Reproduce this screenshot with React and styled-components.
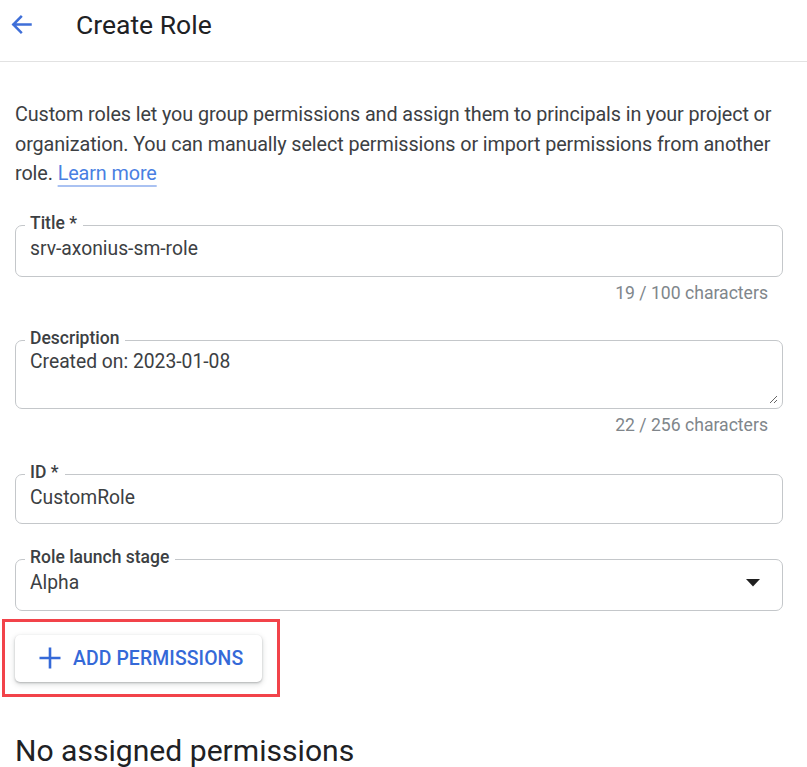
import React from "react";
import styled, { createGlobalStyle } from "styled-components";

const GlobalStyle = createGlobalStyle`
  html, body { margin: 0; padding: 0; background: #ffffff; }
  body { font-family: Roboto, "Liberation Sans", Arial, sans-serif; color: #202124; }
  * { box-sizing: border-box; }
`;

const Page = styled.div`
  width: 807px;
  min-height: 767px;
  overflow: hidden;
`;

const Header = styled.header`
  height: 62px;
  display: flex;
  align-items: center;
  border-bottom: 1px solid #e2e2e2;
  padding: 0 0 12px 8px;
`;

const BackButton = styled.button`
  width: 27px;
  height: 27px;
  padding: 0;
  border: 0;
  background: transparent;
  display: flex;
  align-items: center;
  justify-content: center;
  color: #3f6fd8;
  cursor: pointer;
`;

const PageTitle = styled.h1`
  margin: 0 0 0 41px;
  font-size: 26.5px;
  font-weight: 400;
  color: #202124;
`;

const Content = styled.main`
  padding: 0 24px 0 15px;
`;

const Intro = styled.p`
  margin: 38px 0 0;
  font-size: 19.8px;
  line-height: 29.5px;
  color: #3c4043;
  letter-spacing: -0.1px;
`;

const LearnLink = styled.a`
  color: #4a7fe2;
  text-decoration: underline;
  text-decoration-color: #aac2f2;
  text-decoration-thickness: 1.5px;
  text-underline-offset: 5px;
`;

const FieldGroup = styled.div`
  margin-top: ${(p) => p.$gap}px;
`;

const Box = styled.fieldset`
  margin: 0;
  border: 1px solid #c4c7ca;
  border-radius: 7px;
  padding: 0 14px ${(p) => p.$padBottom}px 14px;
  display: flex;
  align-items: center;
`;

const Label = styled.legend`
  margin-left: -5px;
  padding: 0 6px 6px 5px;
  font-size: 17.5px;
  line-height: 20px;
  font-weight: 500;
  color: #3c4043;
`;

const TextInput = styled.input`
  flex: 1;
  border: 0;
  outline: none;
  padding: 0;
  margin: 0;
  height: 20px;
  font-family: inherit;
  font-size: 19.3px;
  line-height: 20px;
  color: #3c4043;
  background: transparent;
`;

const TextArea = styled.textarea`
  flex: 1;
  border: 0;
  outline: none;
  padding: 0;
  margin: -2px -10px 0 0;
  height: 52px;
  font-family: inherit;
  font-size: 19.3px;
  line-height: 20px;
  color: #3c4043;
  background: transparent;
  resize: vertical;
`;

const SelectValue = styled.div`
  flex: 1;
  font-size: 19.3px;
  line-height: 20px;
  color: #3c4043;
`;

const Caret = styled.svg`
  width: 14px;
  height: 8px;
  margin-right: 8px;
  flex-shrink: 0;
`;

const Helper = styled.div`
  margin-top: 6px;
  padding-right: 15px;
  text-align: right;
  font-size: 17.6px;
  line-height: 20px;
  color: #80868b;
`;

const Highlight = styled.div`
  display: inline-flex;
  margin: 8px 0 0 -13px;
  padding: 13px 15px 12px 10px;
  border: 3px solid #f2434a;
`;

const ActionButton = styled.button`
  display: flex;
  align-items: center;
  gap: 12px;
  height: 47px;
  padding: 0 19px 0 24px;
  border: 0;
  border-radius: 5px;
  background: #ffffff;
  box-shadow: 0 1px 2px rgba(60, 64, 67, 0.3), 0 2px 5px 1px rgba(60, 64, 67, 0.15);
  font-family: inherit;
  font-size: 19.4px;
  font-weight: 500;
  color: #3569d8;
  letter-spacing: 0.1px;
  cursor: pointer;
`;

const SectionTitle = styled.h2`
  margin: 36px 0 0;
  font-size: 30.1px;
  line-height: 36px;
  font-weight: 400;
  color: #202124;
`;

function Field({ label, gap, padBottom = 16, children, helper }) {
  return (
    <FieldGroup $gap={gap}>
      <Box $padBottom={padBottom}>
        <Label>{label}</Label>
        {children}
      </Box>
      {helper && <Helper>{helper}</Helper>}
    </FieldGroup>
  );
}

export default function App() {
  return (
    <Page>
      <GlobalStyle />
      <Header>
        <BackButton aria-label="Back">
          <svg width="27" height="27" viewBox="0 0 24 24" fill="none">
            <path
              d="M20 12H5M11.5 5.2L4.7 12l6.8 6.8"
              stroke="currentColor"
              strokeWidth="2.2"
              strokeLinecap="square"
            />
          </svg>
        </BackButton>
        <PageTitle>Create Role</PageTitle>
      </Header>
      <Content>
        <Intro>
          Custom roles let you group permissions and assign them to principals in your project or
          organization. You can manually select permissions or import permissions from another
          role. <LearnLink href="#">Learn more</LearnLink>
        </Intro>

        <Field label="Title *" gap={24} padBottom={17} helper="19 / 100 characters">
          <TextInput defaultValue="srv-axonius-sm-role" />
        </Field>

        <Field label="Description" gap={25} padBottom={4} helper="22 / 256 characters">
          <TextArea defaultValue="Created on: 2023-01-08" />
        </Field>

        <Field label="ID *" gap={27} padBottom={15}>
          <TextInput defaultValue="CustomRole" />
        </Field>

        <Field label="Role launch stage" gap={23} padBottom={17}>
          <SelectValue>Alpha</SelectValue>
          <Caret viewBox="0 0 14 8">
            <path d="M0 0h14L7 7.5z" fill="#1f1f1f" />
          </Caret>
        </Field>

        <Highlight>
          <ActionButton>
            <svg width="22" height="22" viewBox="0 0 22 22">
              <path d="M11 0.5v21M0.5 11h21" stroke="#3569d8" strokeWidth="2.6" />
            </svg>
            ADD PERMISSIONS
          </ActionButton>
        </Highlight>

        <SectionTitle>No assigned permissions</SectionTitle>
      </Content>
    </Page>
  );
}
